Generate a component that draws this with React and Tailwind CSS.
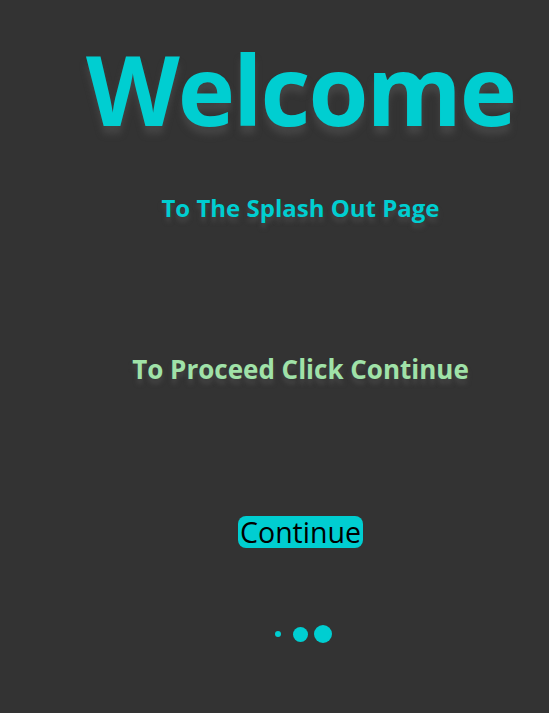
import React from "react";

const font = { fontFamily: "'Open Sans', 'Noto Sans', sans-serif" };

export default function App() {
  return (
    <div
      className="bg-[#333333] min-h-screen w-full flex flex-col items-center pl-[52px]"
      style={font}
    >
      {/* Title */}
      <h1 className="mt-[23px] text-[97px] leading-[130px] font-bold text-[#00ced1] tracking-[-2px] [text-shadow:0_8px_6px_#444444]">
        Welcome
      </h1>

      <h2 className="mt-[40px] text-[24px] leading-[30px] font-bold text-[#00ced1] [text-shadow:0_5px_4px_#444444]">
        To The Splash Out Page
      </h2>

      <p className="mt-[131px] text-[26px] leading-[30px] font-bold text-[#a0e2a8] [text-shadow:0_5px_4px_#444444]">
        To Proceed Click Continue
      </p>

      <button className="mt-[132px] bg-[#00ced1] text-black text-[28.5px] leading-[32px] px-[2px] rounded-lg">
        Continue
      </button>

      {/* Pager dots */}
      <div className="mt-[77px] ml-[6px] flex items-center">
        <span className="w-[6px] h-[6px] rounded-full bg-[#00ced1]" />
        <span className="w-[15px] h-[15px] rounded-full bg-[#00ced1] ml-[12px]" />
        <span className="w-[18px] h-[18px] rounded-full bg-[#00ced1] ml-[6px]" />
      </div>
    </div>
  );
}
